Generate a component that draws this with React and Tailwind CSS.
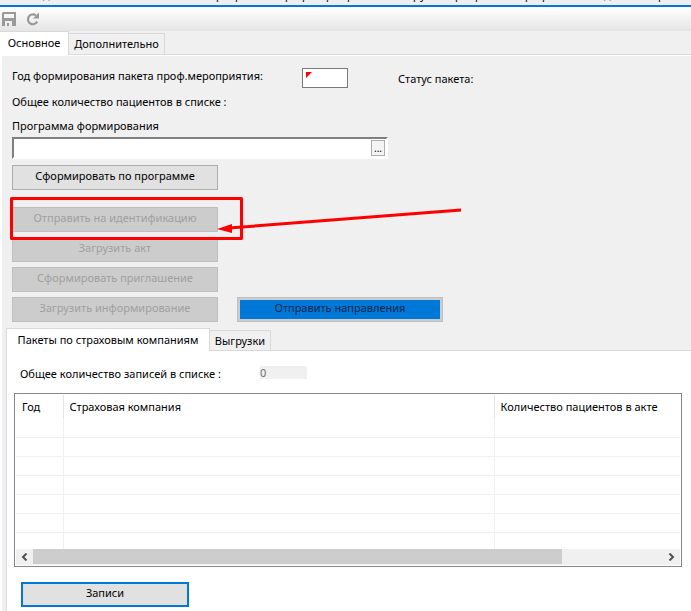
import React from "react";

const CLIPPED_TITLE = [
  ["w-[173px]", "д"],
  ["w-[19px]", "р"],
  ["w-[50px]", "р"],
  ["w-[17px]", "р"],
  ["w-[24px]", "р"],
  ["w-[21px]", "р"],
  ["w-[66px]", "р"],
  ["w-[7px]", "р"],
  ["w-[35px]", "у"],
  ["w-[20px]", "р"],
  ["w-[50px]", "р"],
  ["w-[17px]", "р"],
  ["w-[62px]", "р"],
  ["w-[54px]", "д"],
  ["w-[10px]", "р"],
];

function ActionButton({ children, disabled }) {
  return (
    <button
      disabled={disabled}
      className={
        "h-[25px] w-[206px] border pb-1 text-center leading-4 " +
        (disabled ? "border-[#bfbfbf] bg-[#cccccc] text-[#a0a0a0]" : "border-[#adadad] bg-[#e1e1e1] text-black")
      }
    >
      {children}
    </button>
  );
}

function Toolbar() {
  return (
    <div className="flex h-6 items-center gap-2.5 bg-linear-to-b from-white to-[#e5e5e5] pl-0.5">
      <button aria-label="Сохранить">
        <svg width="14" height="14" viewBox="0 0 14 14" fill="#999999">
          <path fillRule="evenodd" d="M0 1L1 0H14V14H0ZM2 2V6H12V2ZM3 9V14H5V11H7V14H10V9Z" />
        </svg>
      </button>
      <button aria-label="Обновить">
        <svg width="13" height="14" viewBox="0 0 13 14" fill="none">
          <path d="M9.8 3.4A4.9 4.9 0 1 0 11.2 9.6" stroke="#999999" strokeWidth="2.2" />
          <path d="M13 0.5V6.5H7Z" fill="#999999" />
        </svg>
      </button>
    </div>
  );
}

function PackageTable() {
  return (
    <div className="mr-[9px] ml-[7px] border border-[#828790] bg-white p-px">
      <table className="w-full table-fixed border-collapse">
        <thead>
          <tr className="h-[23px] text-left">
            <th className="w-[47px] border-r border-[#e5e5e5] px-1.5 font-normal">Год</th>
            <th className="border-r border-[#e5e5e5] px-1.5 font-normal">Страховая компания</th>
            <th className="w-[186px] px-1.5 font-normal">Количество пациентов в акте</th>
          </tr>
        </thead>
        <tbody>
          {[0, 1, 2, 3, 4, 5, 6].map((row) => (
            <tr key={row} className={row < 6 ? "h-[19px] border-b border-[#f0f0f0]" : "h-[17px]"}>
              <td className="border-r border-[#f0f0f0]" />
              <td className="border-r border-[#f0f0f0]" />
              <td />
            </tr>
          ))}
        </tbody>
      </table>
      <div className="flex h-4 bg-[#f0f0f0]">
        <button aria-label="Влево" className="flex w-[17px] items-center justify-center">
          <svg width="7" height="8" viewBox="0 0 7 8" fill="none" stroke="#505050" strokeWidth="2">
            <path d="M5.5 0.5L2 4L5.5 7.5" />
          </svg>
        </button>
        <div className="flex-1">
          <div className="h-[15px] w-[84%] bg-[#cdcdcd]" />
        </div>
        <button aria-label="Вправо" className="flex w-[17px] items-center justify-center">
          <svg width="7" height="8" viewBox="0 0 7 8" fill="none" stroke="#505050" strokeWidth="2">
            <path d="M1.5 0.5L5 4L1.5 7.5" />
          </svg>
        </button>
      </div>
    </div>
  );
}

export default function App() {
  return (
    <div className="flex min-h-screen flex-col bg-[#f0f0f0] font-['Noto_Sans','Open_Sans',sans-serif] text-[11px] leading-4 text-black">
      <div className="flex h-[5px] items-end overflow-hidden bg-[#eeeef2] pb-0.5 pl-[43px]">
        {CLIPPED_TITLE.map(([width, letter], i) => (
          <span key={i} className={"shrink-0 " + width}>{letter}</span>
        ))}
      </div>
      <div className="h-0.5 bg-[#0078d7]" />
      <Toolbar />
      <div className="flex h-6 items-end border-b border-[#d9d9d9]">
        <button className="-mb-px h-6 w-[69px] border-t border-r border-[#d9d9d9] bg-white pb-0.5">Основное</button>
        <button className="h-[21px] w-24 border-t border-r border-[#d9d9d9]">Дополнительно</button>
      </div>
      <div className="flex flex-1 flex-col border-t border-l-2 border-white">
        <div className="relative flex flex-col pl-2.5">
          <div className="flex items-start pt-3">
            <label htmlFor="year" className="w-[290px]">Год формирования пакета проф.мероприятия:</label>
            <div className="relative">
              <input id="year" className="block h-5 w-[46px] border border-[#7a7a7a] bg-white px-1 outline-none" />
              <svg className="absolute top-1 left-1" width="6" height="6" viewBox="0 0 6 6">
                <path d="M0 0H6L0 6Z" fill="#ff0000" />
              </svg>
            </div>
            <span className="mt-[3px] ml-[50px]">Статус пакета:</span>
          </div>
          <div className="mt-[6px]">Общее количество пациентов в списке :</div>
          <label htmlFor="program" className="mt-2">Программа формирования</label>
          <div className="mt-[3px] flex h-[22px] w-[376px] border-2 border-t-[#808080] border-r-white border-b-white border-l-[#808080] bg-white p-px">
            <input id="program" className="min-w-0 flex-1 px-1 outline-none" />
            <button aria-label="Выбрать программу" className="flex h-4 w-3.5 items-center justify-center border border-[#adadad] bg-[#f4f4f4] text-[10px]">...</button>
          </div>
          <div className="mt-1.5"><ActionButton>Сформировать по программе</ActionButton></div>
          <div className="mt-[17px] flex flex-col items-start gap-[5px]">
            <ActionButton disabled>Отправить на идентификацию</ActionButton>
            <ActionButton disabled>Загрузить акт</ActionButton>
            <ActionButton disabled>Сформировать приглашение</ActionButton>
            <div className="flex gap-[19px]">
              <ActionButton disabled>Загрузить информирование</ActionButton>
              <button className="h-[25px] w-[206px] border border-[#bfbfbf] bg-[#cccccc] p-0.5 leading-4 text-[#00264d]">
                <span className="block h-[19px] bg-[#0078d7]">Отправить направления</span>
              </button>
            </div>
          </div>
          <svg className="pointer-events-none absolute top-[140px] left-[7px]" width="456" height="46" viewBox="0 0 456 46" fill="none">
            <rect x="2.5" y="2.5" width="230" height="40" stroke="#ff0000" strokeWidth="3" strokeLinejoin="round" />
            <path d="M452 14L220 32" stroke="#ff0000" strokeWidth="3" />
            <path d="M208 33L223 28V37Z" fill="#ff0000" />
          </svg>
        </div>
        <div className="mt-[7px] ml-1 flex h-[22px] items-end border-b border-[#d9d9d9]">
          <button className="-mb-px h-[23px] w-[204px] border-t border-r border-l border-[#d9d9d9] bg-white">Пакеты по страховым компаниям</button>
          <button className="h-5 w-[61px] border-t border-r border-[#d9d9d9]">Выгрузки</button>
        </div>
        <div className="ml-1 flex-1 border-l border-[#d9d9d9] bg-white">
          <div className="flex items-start pt-[15px] pl-[13px]">
            <label htmlFor="total" className="w-60">Общее количество записей в списке :</label>
            <input id="total" readOnly value="0" className="h-[13px] w-[47px] bg-[#f0f0f0] text-[#6d6d6d] outline-none" />
          </div>
          <div className="h-[11px]" />
          <PackageTable />
          <div className="pt-[15px] pl-[14px]">
            <button className="h-[25px] w-[168px] border-2 border-[#0078d7] bg-[#e1e1e1] pb-1 leading-4">Записи</button>
          </div>
        </div>
      </div>
    </div>
  );
}
